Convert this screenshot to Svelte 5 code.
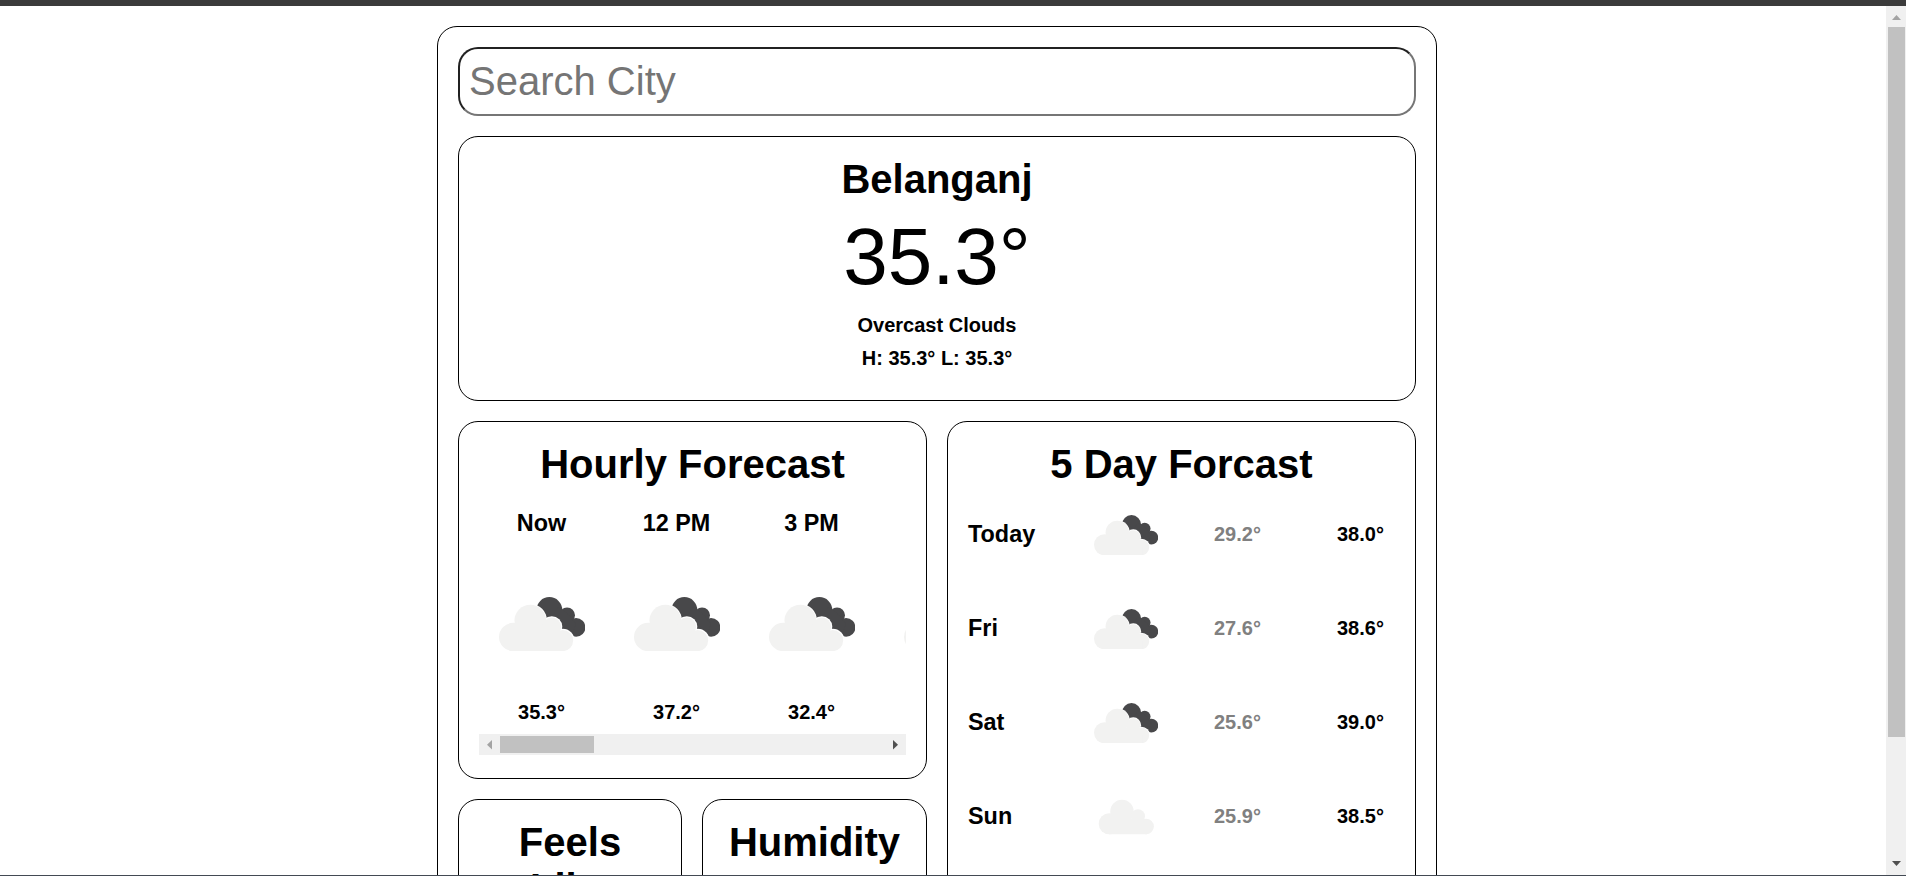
<script>
  const hourly = [
    { time: 'Now', temp: '35.3°' },
    { time: '12 PM', temp: '37.2°' },
    { time: '3 PM', temp: '32.4°' },
    { time: '', temp: '' }
  ];
  const days = [
    { name: 'Today', low: '29.2°', high: '38.0°', broken: true },
    { name: 'Fri', low: '27.6°', high: '38.6°', broken: true },
    { name: 'Sat', low: '25.6°', high: '39.0°', broken: true },
    { name: 'Sun', low: '25.9°', high: '38.5°', broken: false }
  ];
</script>

{#snippet lightCloud()}
  <g class="light">
    <circle cx="23.2" cy="57" r="14.2" />
    <circle cx="40.3" cy="40.6" r="15.8" />
    <circle cx="61.8" cy="46.8" r="9.4" />
    <circle cx="72.7" cy="60.6" r="10.5" />
    <path d="M23 50 H62 L74 60 V71.1 H23 Z" />
  </g>
{/snippet}

{#snippet clouds(broken)}
  <svg class="clouds" viewBox="9 17 86.4 54.2" aria-hidden="true">
    {#if broken}
      <g class="dark">
        <circle cx="59.4" cy="30" r="12.9" />
        <circle cx="77.1" cy="35.3" r="7.9" />
        <circle cx="86.1" cy="47.4" r="9.3" />
        <path d="M59 42 L68 27 L77 33 L86 44 L82 55 L68 54 Z" />
      </g>
      <g class="gap">
        <circle cx="40.3" cy="40.6" r="16.7" />
        <circle cx="61.8" cy="46.8" r="10.5" />
        <circle cx="72.7" cy="60.6" r="11.8" />
      </g>
      {@render lightCloud()}
    {:else}
      <g transform="translate(6.3 -4)">{@render lightCloud()}</g>
    {/if}
  </svg>
{/snippet}

<div class="window">
  <div class="topbar"></div>
  <div class="view">
    <main>
      <div class="app">
        <input type="text" placeholder="Search City" />
        <section class="card current">
          <h1>Belanganj</h1>
          <p class="big">35.3°</p>
          <p class="line">Overcast Clouds</p>
          <p class="line">H: 35.3° L: 35.3°</p>
        </section>
        <div class="columns">
          <div class="left">
            <section class="card hourly">
              <h1>Hourly Forecast</h1>
              <div class="strip">
                {#each hourly as h}
                  <article>
                    <h3>{h.time}</h3>
                    <div class="icon">{@render clouds(true)}</div>
                    <p class="line">{h.temp}</p>
                  </article>
                {/each}
              </div>
              <div class="hbar">
                <svg width="21" height="21"><path class="off" d="M13 6 V15.4 L8 10.7 Z" /></svg>
                <div class="hthumb"></div>
                <svg width="21" height="21"><path class="on" d="M8 6 V15.4 L13 10.7 Z" /></svg>
              </div>
            </section>
            <div class="pair">
              <section class="card"><h1>Feels Like</h1></section>
              <section class="card"><h1>Humidity</h1></section>
            </div>
          </div>
          <section class="card daily">
            <h1>5 Day Forcast</h1>
            {#each days as d}
              <div class="day">
                <h3>{d.name}</h3>
                <div class="icon">{@render clouds(d.broken)}</div>
                <p class="line low">{d.low}</p>
                <p class="line">{d.high}</p>
              </div>
            {/each}
          </section>
        </div>
      </div>
    </main>
    <div class="vbar">
      <svg width="20" height="21"><path class="off" d="M6 14 L10.5 9 L15 14 Z" /></svg>
      <div class="vthumb"></div>
      <svg width="20" height="21"><path class="on" d="M6 7 H15 L10.5 12 Z" /></svg>
    </div>
  </div>
</div>

<style>
  :global(body) {
    margin: 0;
    overflow: hidden;
    background: #fff;
  }
  .window {
    height: 876px;
    box-sizing: border-box;
    display: flex;
    flex-direction: column;
    overflow: hidden;
    border-bottom: 1px solid #434a54;
    font-family: 'Liberation Sans', Arial, sans-serif;
    font-size: 20px;
    color: #000;
  }
  .topbar {
    height: 6px;
    flex: none;
    background: #3b3b3b;
  }
  .view {
    flex: 1;
    min-height: 0;
    display: flex;
  }
  main {
    flex: 1;
    overflow: hidden;
    padding: 20px 12px 0 0;
  }
  .app {
    box-sizing: border-box;
    width: 1000px;
    height: 1100px;
    margin: 0 auto;
    padding: 20px;
    border: 1px solid #000;
    border-radius: 20px;
    display: flex;
    flex-direction: column;
    gap: 20px;
  }
  input {
    box-sizing: border-box;
    width: 100%;
    height: 69px;
    padding: 0 9px;
    border: 2px solid;
    border-color: #212121 #767676 #767676 #212121;
    border-radius: 20px;
    background: #fff;
    font: 40px 'Liberation Sans', Arial, sans-serif;
    outline: none;
  }
  input::placeholder {
    color: #757575;
  }
  .card {
    box-sizing: border-box;
    border: 1px solid #000;
    border-radius: 20px;
    padding: 19px 20px 20px;
    text-align: center;
  }
  h1,
  h3,
  p {
    margin: 0;
  }
  h1 {
    font-size: 40px;
    line-height: 46px;
    margin-bottom: 11px;
  }
  h3 {
    height: 27px;
    font-size: 23.4px;
    line-height: 27px;
  }
  .big {
    font-size: 80px;
    line-height: 88px;
    margin-bottom: 13px;
  }
  .line {
    height: 23px;
    font-weight: bold;
    line-height: 23px;
  }
  .current {
    height: 265px;
  }
  .current .line {
    margin-bottom: 10px;
  }
  .columns {
    flex: 1;
    display: grid;
    grid-template-columns: 469px 469px;
    gap: 20px;
  }
  .left {
    display: flex;
    flex-direction: column;
    gap: 20px;
  }
  .hourly {
    height: 358px;
  }
  .strip {
    display: flex;
    gap: 10px;
    height: 236px;
    overflow: hidden;
  }
  article {
    flex: none;
    width: 125px;
    padding-top: 12px;
  }
  .icon {
    display: flex;
    align-items: center;
  }
  .hourly .icon {
    box-sizing: border-box;
    height: 165px;
    padding: 60px 0 0 20px;
    align-items: flex-start;
  }
  .hourly .clouds {
    width: 86.4px;
    height: 54.2px;
  }
  .hourly .line {
    margin-top: -1px;
  }
  .clouds {
    display: block;
  }
  .light {
    fill: #f2f2f1;
  }
  .dark {
    fill: #48484a;
  }
  .gap {
    fill: #fff;
  }
  .hbar {
    display: flex;
    align-items: center;
    justify-content: space-between;
    height: 21px;
    background: #f0f0f0;
  }
  .hthumb {
    width: 94px;
    height: 17px;
    margin-right: auto;
    background: #c1c1c1;
  }
  .off {
    fill: #a3a3a3;
  }
  .on {
    fill: #505050;
  }
  .pair {
    flex: 1;
    display: grid;
    grid-template-columns: 224px 225px;
    gap: 20px;
  }
  .daily h1 {
    margin-bottom: 0;
  }
  .day {
    display: grid;
    grid-template-columns: 126px 120px 123px 1fr;
    align-items: center;
    height: 94px;
    text-align: left;
  }
  .day .icon {
    padding-top: 2px;
  }
  .day .clouds {
    width: 64.3px;
    height: 40.3px;
  }
  .low {
    color: #808080;
  }
  .vbar {
    flex: none;
    width: 20px;
    display: flex;
    flex-direction: column;
    align-items: center;
    background: #f0f0f0;
  }
  .vthumb {
    width: 17px;
    height: 710px;
    margin-bottom: auto;
    background: #c1c1c1;
  }
</style>
